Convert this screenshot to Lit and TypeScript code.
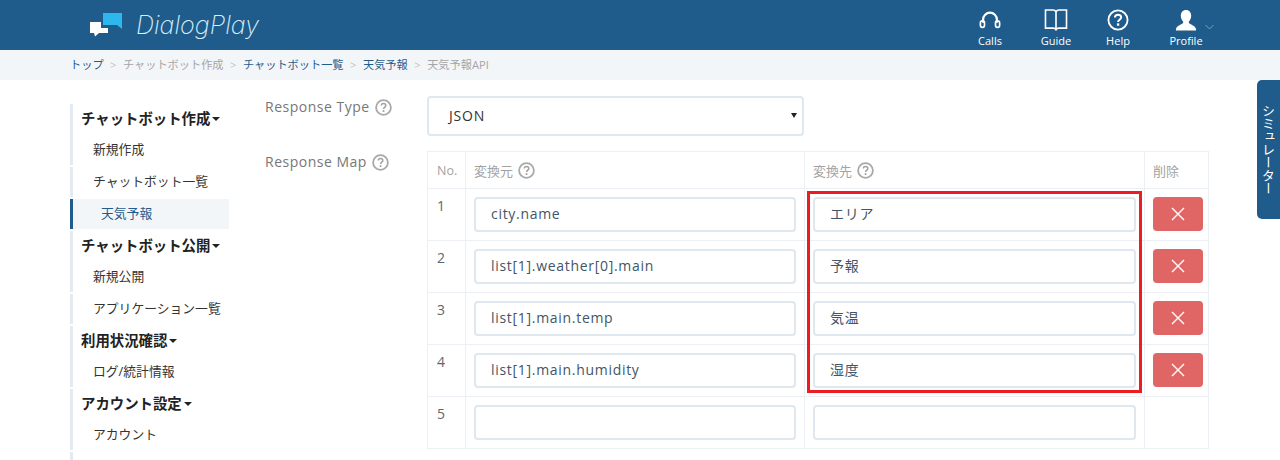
import { LitElement, html, css, svg } from "lit";
import { customElement } from "lit/decorators.js";

const help = () => html`<svg class="help" width="17" height="17" viewBox="0 0 17 17"><circle cx="8.5" cy="8.5" r="7.400" fill="none" stroke="#a9a9a9" stroke-width="1.800"/><path d="M6.300 6.600c0-1.400 1-2.200 2.300-2.200s2.200.8 2.200 2c0 1.800-2.200 1.800-2.200 3.600" fill="none" stroke="#a0a0a0" stroke-width="1.500"/><rect x="7.700" y="11.200" width="1.700" height="1.800" fill="#a0a0a0"/></svg>`;

const icons = {
  calls: svg`<path d="M4.500 13V9.500a7.500 7.500 0 0 1 15 0V13" fill="none" stroke="#fff" stroke-width="2.400"/><rect x="1.500" y="11" width="4.500" height="7" rx="2.200" fill="none" stroke="#fff" stroke-width="1.800"/><rect x="18" y="11" width="4.500" height="7" rx="2.200" fill="none" stroke="#fff" stroke-width="1.800"/>`,
  guide: svg`<path d="M1 1h8c1.500 0 2.500 1 3 2 .5-1 1.500-2 3-2h8v19h-8c-1.500 0-2.500.5-3 1.500-.5-1-1.500-1.500-3-1.500H1zM12 3v18.500" fill="none" stroke="#fff" stroke-width="1.700"/>`,
  help: svg`<circle cx="12" cy="11.500" r="10" fill="none" stroke="#fff" stroke-width="1.900"/><path d="M8.800 9c0-2 1.400-3.100 3.300-3.100s3.200 1.100 3.200 2.800c0 2.600-3.200 2.600-3.200 5" fill="none" stroke="#fff" stroke-width="2.100"/><rect x="10.900" y="15" width="2.400" height="2.500" fill="#fff"/>`,
  user: svg`<path d="M12 1c3.300 0 5.400 2.500 5.400 6 0 2.600-1 4.800-2.400 6v1.500c0 1.300 6.500 2.500 7.500 6.500v1.500h-21V21c1-4 7.500-5.200 7.500-6.500V13C7.600 11.800 6.600 9.600 6.600 7c0-3.500 2.100-6 5.400-6z" fill="#fff"/>`,
};

@customElement("app-root")
export class AppRoot extends LitElement {
  static styles = css`
    :host { display: block; height: 460px; overflow: hidden; position: relative; background: #fff; font-family: "Open Sans", "Noto Sans CJK JP", sans-serif; color: #333; }
    * { box-sizing: border-box; }
    .top { height: 50px; background: #1f5c8b; display: flex; align-items: flex-start; }
    .logo { display: flex; margin-left: 90px; padding-top: 13px; }
    .logo svg { display: block; }
    .brand { margin-left: 14px; margin-top: -1px; font: italic 200 25.100px/26px Inter, sans-serif; color: #d5effb; }
    .nav { margin-left: auto; display: flex; margin-right: 64px; }
    .nav-item { width: 60px; display: flex; flex-direction: column; align-items: center; color: #fff; font-size: 11px; line-height: 15px; padding-top: 9px; position: relative; }
    .nav-item svg { display: block; margin-bottom: 2px; }
    .g1 { margin-left: 6px; }
    .g2 { margin-left: 2px; }
    .g3 { margin-left: 8px; }
    .nav-item svg.chev { position: absolute; left: 49px; top: 24px; margin: 0; }
    .crumbs { height: 30px; background: #f3f6f9; display: flex; align-items: center; padding: 0 0 2px 70px; font-size: 11.200px; color: #a5a5a5; }
    .crumbs a { color: #1f5c8b; }
    .crumbs i { font-style: normal; color: #c4c4c4; margin: 0 6.500px; }
    .main { display: flex; align-items: flex-start; }
    .side { width: 159px; margin: 24px 0 0 70px; display: flex; flex-direction: column; gap: 2px; flex: none; }
    .grp { border-left: 3px solid #e3eaf2; }
    .head { height: 30px; padding-left: 8px; font-size: 14.400px; font-weight: 700; color: #222; line-height: 30px; display: flex; align-items: center; }
    .caret { display: inline-block; margin-left: 2px; border: 4px solid transparent; border-top: 4px solid #222; border-bottom: 0; }
    .lnk { height: 31px; line-height: 31px; padding-left: 20px; font-size: 12.800px; color: #333; }
    .single { height: 30px; line-height: 28px; }
    .grp.on { background: #f3f6f9; border-left-color: #1f5c8b; }
    .grp.on .lnk { padding-left: 28px; color: #1f5c8b; }
    .form { margin: 16px 0 0 36px; width: 944px; }
    .row { display: flex; }
    .lab { width: 162px; font-size: 14px; color: #777; letter-spacing: .5px; line-height: 22px; display: flex; align-items: flex-start; gap: 5px; }
    .lab svg { margin-top: 3px; }
    .r1 { height: 55px; }
    .sel { width: 377px; height: 40px; border: 2px solid #dfe7ef; border-radius: 4px; display: flex; align-items: center; justify-content: space-between; padding: 0 5px 2px 20px; font-size: 14px; color: #333; letter-spacing: .8px; }
    .arrow { border: 3px solid transparent; border-top: 5px solid #222; border-bottom: 0; }
    .wrap { position: relative; width: 781px; }
    table { border-collapse: collapse; table-layout: fixed; width: 781px; }
    th, td { border: 1px solid #ecf0f4; padding: 0; vertical-align: top; }
    th { height: 37px; font-weight: 400; font-size: 13px; color: #a3a3a3; text-align: left; vertical-align: middle; padding-left: 8px; }
    th span { display: inline-flex; align-items: center; gap: 5px; }
    th.no { padding-left: 9px; font-size: 12.500px; }
    td { height: 52px; padding: 8px 8px 0; }
    td.n { font-size: 14px; color: #666; padding: 7px 0 0 9px; }
    td.d { padding: 8px 5px 0 8px; }
    .inp { height: 35px; border: 2px solid #dfe7ef; border-radius: 4px; padding-left: 15px; font-size: 14px; line-height: 29px; letter-spacing: .7px; color: #445566; }
    .del { width: 50px; height: 34px; background: #e06565; border-radius: 4px; display: flex; align-items: center; justify-content: center; }
    .mark { position: absolute; left: 380px; top: 40px; width: 335px; height: 202px; border: 3px solid #ec1c24; pointer-events: none; }
    .sim { position: absolute; left: 1257px; top: 80px; width: 23px; height: 139px; background: #1f5c8b; border-radius: 5px 0 0 5px; color: #fff; font-size: 13px; writing-mode: vertical-rl; display: flex; align-items: center; justify-content: center; }
  `;

  render() {
    const rows = [["city.name", "エリア"], ["list[1].weather[0].main", "予報"], ["list[1].main.temp", "気温"], ["list[1].main.humidity", "湿度"]];
    const x = html`<svg width="14" height="14" viewBox="0 0 14 14"><path d="M1 1l12 12M13 1L1 13" stroke="#fff" stroke-width="1.400" fill="none"/></svg>`;
    const grp = (title: string, kids: string[]) => html`<div class="grp"><div class="head">${title}<span class="caret"></span></div>${kids.map((k) => html`<div class="lnk">${k}</div>`)}</div>`;
    return html`
      <header class="top">
        <div class="logo">
          <svg width="32" height="24" viewBox="0 0 32 24"><path d="M13 0H32V16L27 12H13Z" fill="#2db7ec"/><path d="M0 9H11V15H18V20H9L5 23.500 4 20H0Z" fill="#fff"/></svg>
          <div class="brand">DialogPlay</div>
        </div>
        <nav class="nav">
          <div class="nav-item"><svg width="22" height="22" viewBox="0 -2 24 24">${icons.calls}</svg>Calls</div>
          <div class="nav-item g1"><svg width="24" height="22" viewBox="0 0 24 23">${icons.guide}</svg>Guide</div>
          <div class="nav-item g2"><svg width="24" height="22" viewBox="0 0 24 23">${icons.help}</svg>Help</div>
          <div class="nav-item g3"><svg width="24" height="22" viewBox="0 0 24 23">${icons.user}</svg>Profile
            <svg class="chev" width="9" height="6" viewBox="0 0 9 6"><path d="M.5 1l4 4 4-4" fill="none" stroke="#7d9db8" stroke-width="1"/></svg></div>
        </nav>
      </header>
      <div class="crumbs"><a>トップ</a><i>&gt;</i>チャットボット作成<i>&gt;</i><a>チャットボット一覧</a><i>&gt;</i><a>天気予報</a><i>&gt;</i>天気予報API</div>
      <div class="main">
        <aside class="side">
          ${grp("チャットボット作成", ["新規作成"])}
          <div class="grp"><div class="lnk single">チャットボット一覧</div></div>
          <div class="grp on"><div class="lnk single">天気予報</div></div>
          ${grp("チャットボット公開", ["新規公開"])}
          <div class="grp"><div class="lnk single">アプリケーション一覧</div></div>
          ${grp("利用状況確認", ["ログ/統計情報"])}
          ${grp("アカウント設定", ["アカウント"])}
          <div class="grp"><div class="lnk single">ユーザー</div></div>
        </aside>
        <section class="form">
          <div class="row r1"><div class="lab">Response Type ${help()}</div><div class="sel">JSON<span class="arrow"></span></div></div>
          <div class="row"><div class="lab">Response Map ${help()}</div>
            <div class="wrap">
              <table>
                <colgroup><col style="width:38px"/><col style="width:339px"/><col style="width:340px"/><col style="width:64px"/></colgroup>
                <tr><th class="no">No.</th><th><span>変換元 ${help()}</span></th><th><span>変換先 ${help()}</span></th><th>削除</th></tr>
                ${rows.map((r, i) => html`<tr><td class="n">${i + 1}</td><td><div class="inp">${r[0]}</div></td><td><div class="inp">${r[1]}</div></td><td class="d"><div class="del">${x}</div></td></tr>`)}
                <tr><td class="n">5</td><td><div class="inp"></div></td><td><div class="inp"></div></td><td></td></tr>
              </table>
              <div class="mark"></div>
            </div>
          </div>
        </section>
      </div>
      <div class="sim">シミュレーター</div>
    `;
  }
}
